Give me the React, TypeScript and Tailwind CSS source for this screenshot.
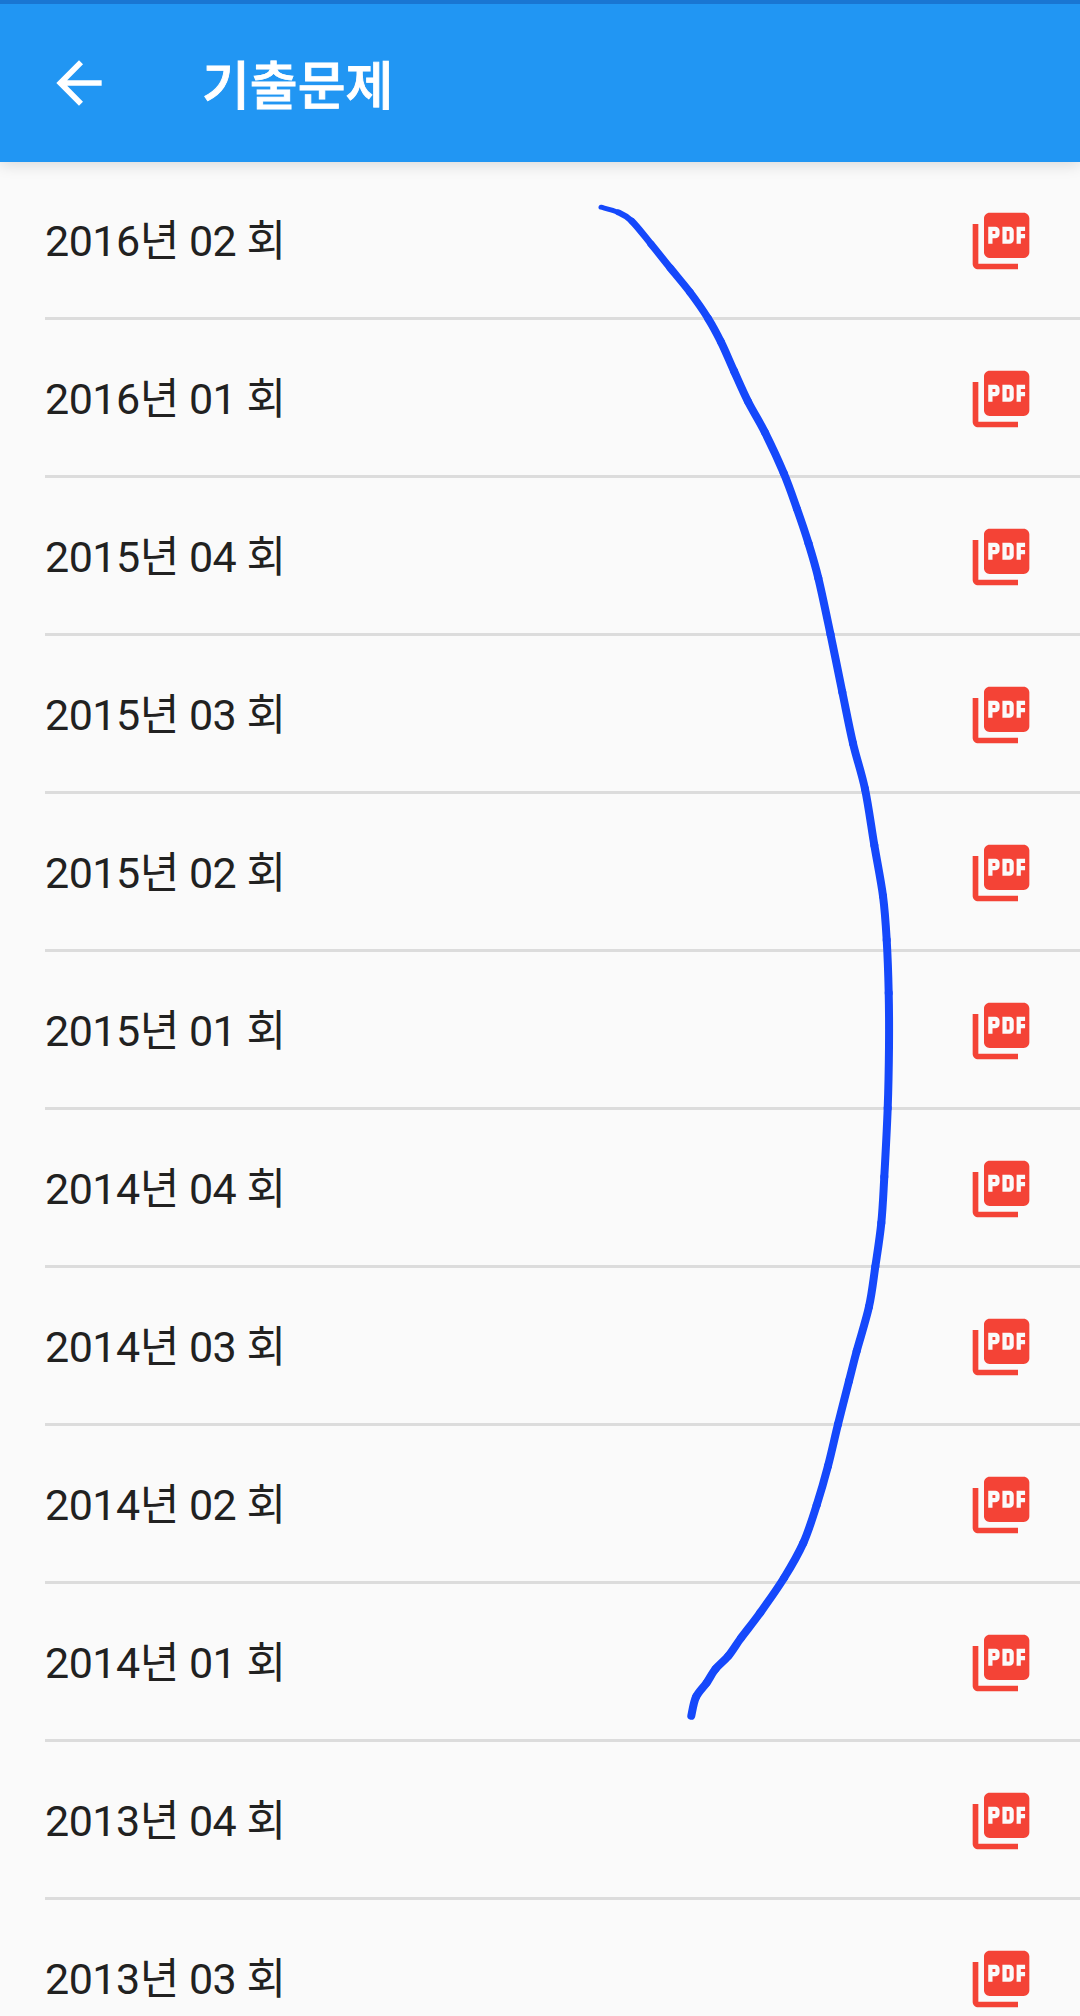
import { MdArrowBack, MdPictureAsPdf } from 'react-icons/md';

const exams = [
  { year: 2016, round: '02' },
  { year: 2016, round: '01' },
  { year: 2015, round: '04' },
  { year: 2015, round: '03' },
  { year: 2015, round: '02' },
  { year: 2015, round: '01' },
  { year: 2014, round: '04' },
  { year: 2014, round: '03' },
  { year: 2014, round: '02' },
  { year: 2014, round: '01' },
  { year: 2013, round: '04' },
  { year: 2013, round: '03' },
];

// x, y, pen width
const strokePoints = [
  [601, 207.2, 4.5], [618, 212.3, 5.5], [631.7, 221, 6.5], [651, 244, 7],
  [670, 267.7, 7.5], [690, 292.3, 7.5], [708, 318.3, 7.8], [721, 342, 8],
  [734, 371, 8], [748, 401.5, 8], [765, 432.5, 8], [783.8, 473.3, 8],
  [797, 509, 8], [808.5, 543.3, 8], [818.3, 578, 8], [830.5, 634.3, 8],
  [842.3, 692, 8], [853, 743.3, 8], [865, 789, 8], [874.3, 845, 8],
  [883, 896, 8], [886.7, 940, 8], [888.7, 993, 8], [889, 1046.7, 8],
  [887.7, 1108, 8], [884.3, 1176.7, 8], [881.3, 1223, 8], [875.3, 1266.7, 8],
  [869, 1306.7, 8], [856.7, 1351, 8], [849, 1381, 8], [838, 1424.3, 8],
  [828, 1466, 8], [816.7, 1505, 8], [803.3, 1543, 8], [784, 1578, 8],
  [760, 1613, 8], [741, 1638, 8], [728.3, 1656, 8], [715.5, 1669, 8],
  [706.7, 1682.7, 8], [696, 1697, 8], [691.3, 1715.8, 8],
];

function PenStroke() {
  return (
    <svg
      className="absolute inset-0 pointer-events-none"
      width="1080"
      height="2016"
      viewBox="0 0 1080 2016"
      fill="none"
      stroke="#1548fb"
      strokeLinecap="round"
    >
      {strokePoints.slice(0, -1).map(([x1, y1, w], i) => {
        const [x0, y0] = strokePoints[Math.max(i - 1, 0)];
        const [x2, y2, w2] = strokePoints[i + 1];
        const [x3, y3] = strokePoints[Math.min(i + 2, strokePoints.length - 1)];
        const c1 = `${x1 + (x2 - x0) / 6} ${y1 + (y2 - y0) / 6}`;
        const c2 = `${x2 - (x3 - x1) / 6} ${y2 - (y3 - y1) / 6}`;
        return <path key={i} d={`M${x1} ${y1}C${c1} ${c2} ${x2} ${y2}`} strokeWidth={(w + w2) / 2} />;
      })}
    </svg>
  );
}

export default function App() {
  return (
    <div className="relative w-[1080px] h-[2016px] overflow-hidden bg-[#fafafa] font-[Roboto,'Noto_Sans_CJK_KR',sans-serif]">
      <header className="relative flex items-center h-[162px] pl-[45px] bg-[#2196f3] border-t-4 border-[#1976d2] text-white shadow-[0_3px_14px_rgba(0,0,0,0.13)]">
        <MdArrowBack size={68} />
        <h1 className="ml-[89px] pt-2.5 text-[52px] leading-none font-medium [-webkit-text-stroke:0.9px_white]">기출문제</h1>
      </header>

      <ul>
        {exams.map((exam) => (
          <li key={`${exam.year}-${exam.round}`} className="h-[158px] pl-[45px]">
            <div className="flex items-center justify-between h-full pt-0.5 pr-[45px] border-b-3 border-[#dcdcdc]">
              <span className="pt-px text-[43px] leading-none tracking-[-0.5px] text-[#212121]">
                {exam.year}년 {exam.round} 회
              </span>
              <MdPictureAsPdf size={68} className="text-[#f44336]" />
            </div>
          </li>
        ))}
      </ul>

      <PenStroke />
    </div>
  );
}
